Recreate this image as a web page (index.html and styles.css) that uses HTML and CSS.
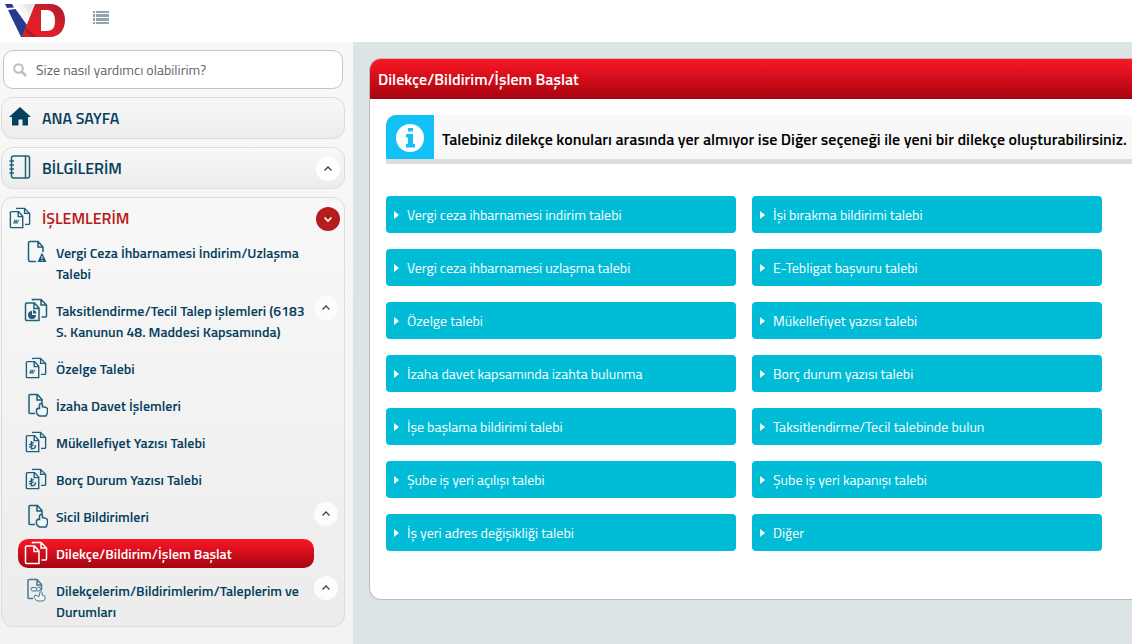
FILE: index.html
```html
<!DOCTYPE html>
<html lang="tr">
<head>
<meta charset="utf-8">
<meta name="viewport" content="width=device-width, initial-scale=1">
<title>Dilekçe/Bildirim/İşlem Başlat</title>
<link rel="stylesheet" href="styles.css">
</head>
<body>
<svg class="sprite" aria-hidden="true">
  <defs>
    <symbol id="sheet" viewBox="0 0 24 24"><path d="M12 21.500H6q-1.500 0-1.500-1.500V3q0-1.500 1.500-1.500h8l5 5.500v5M14 1.500v5.500h5"/></symbol>
    <symbol id="sheets" viewBox="0 0 24 24"><path d="M2.500 5h8l4.500 5v12.500H2.500q-1 0-1-1V6q0-1 1-1zM10 5v5.500h5M8.500 2.500v-1h8.500l5.500 5.500v11q0 1-1 1h-4M17 1.500v5.500h5.500"/></symbol>
    <symbol id="hand" viewBox="0 0 24 24"><path d="M11 20.500H6q-1 0-1-1V2.500q0-1 1-1h7.500l4.500 5v4M13 1.500v5.500h5"/><path class="paper" d="M12.500 16.500q1-1.500 3-1v-3q0-2 1.500-2t1.500 2v1.200q4.500.3 5 2.300v3.500l-1.500 3.500h-6.500q-3.500-2-3-4z"/></symbol>
    <symbol id="lira" viewBox="0 0 24 24"><path d="M7 11v8.500c3 0 4.500-1.500 4.500-4M4.500 15l5-2.500M4.500 17.500l5-2.500"/></symbol>
    <symbol id="up" viewBox="0 0 24 24"><path d="M8.500 13.500l3.500-3.500 3.500 3.500"/></symbol>
    <symbol id="down" viewBox="0 0 24 24"><path d="M8.500 10.500l3.500 3.500 3.500-3.500"/></symbol>
  </defs>
</svg>

<header class="topbar">
  <a class="logo" href="#" aria-label="İVD">
    <svg width="62" height="34" viewBox="0 0 62 34">
      <defs>
        <linearGradient id="logo-red" x1="0" y1="1" x2="1" y2="0"><stop offset="0" stop-color="#ef1c24"/><stop offset=".45" stop-color="#dc2028"/><stop offset="1" stop-color="#ad1c30"/></linearGradient>
      </defs>
      <path fill="#273a8f" d="M0 0h7l2 3.500-7 .500zM3 6l7.500-1L22 21l-5 12h-1z"/>
      <path fill="#e6e6e8" d="M13 0h16l-7 19z"/>
      <path fill="#f7f7f7" d="M13 0h5l7 11-3 8z"/>
      <path fill="url(#logo-red)" fill-rule="evenodd" d="M30 0h15c10 0 15 7 15 16s-5 17-15 17H17zM36 6v21h6c6 0 8-4 8-10s-2-11-8-11z"/>
      <path fill="#a81e2b" d="M21 24l11 9H17z"/>
      <path fill="#d9202a" d="M20 27l7 6H17z"/>
    </svg>
  </a>
  <button class="menu-toggle" type="button" aria-label="Menü">
    <svg width="16" height="13" viewBox="0 0 16 13" fill="#90a4ae"><path d="M0 0h2v2H0zM3 0h13v2H3zM0 3h2v3H0zM3 3h13v3H3zM0 7h2v3H0zM3 7h13v3H3zM0 11h2v2H0zM3 11h13v2H3z"/></svg>
  </button>
</header>

<div class="layout">
  <nav class="sidebar" aria-label="Ana menü">
    <label class="search">
      <svg width="14" height="14" viewBox="0 0 14 14" fill="none" stroke="#b9bec2" stroke-width="2"><circle cx="5.500" cy="5.500" r="4.300"/><path d="M8.700 8.700l4.300 4.300" stroke-width="2.500"/></svg>
      <input type="text" placeholder="Size nasıl yardımcı olabilirim?" aria-label="Size nasıl yardımcı olabilirim?">
    </label>

    <section class="card">
      <div class="card-head">
        <a class="card-link" href="#"><svg class="icon solid" viewBox="0 0 24 24"><path d="M12 1l11 10h-3v8.500h-5.500v-6h-4v6H4V11H1l5-4.500z"/></svg>ANA SAYFA</a>
      </div>
    </section>

    <section class="card">
      <div class="card-head">
        <a class="card-link" href="#"><svg class="icon" viewBox="0 0 24 24"><path d="M5.500 0h14q2 0 2 2v18q0 2-2 2h-14q-2 0-2-2V2q0-2 2-2zM17.500 0v22M1.500 5h4.500M1.500 9h4.500M1.500 13h4.500M1.500 17h4.500"/></svg>BİLGİLERİM</a>
        <button class="round" type="button" aria-label="Bilgilerim aç"><svg viewBox="0 0 24 24"><use href="#up"/></svg></button>
      </div>
    </section>

    <section class="card open">
      <div class="card-head">
        <a class="card-link current" href="#"><svg class="icon small" viewBox="0 0 24 24"><use href="#sheets"/><path class="thin" d="M5 18l1.500-4v4l2-4v4l2.500-4"/></svg>İŞLEMLERİM</a>
        <button class="round red" type="button" aria-label="İşlemlerim kapat"><svg viewBox="0 0 24 24"><use href="#down"/></svg></button>
      </div>
      <ul class="submenu">
        <li><a href="#"><svg class="icon" viewBox="0 0 24 24"><use href="#sheet"/><path class="fill" d="M18 12.500l4.500 9.500h-9z"/><path class="mark" d="M18 16v3M18 20v1"/></svg><span>Vergi Ceza İhbarnamesi İndirim/Uzlaşma Talebi</span></a></li>
        <li><a href="#"><svg class="icon" viewBox="0 0 24 24"><use href="#sheets"/><path class="fill" d="M8 13v4h4a4 4 0 1 1-4-4zM9 12a4 4 0 0 1 3.500 3.500H9z"/></svg><span>Taksitlendirme/Tecil Talep işlemleri (6183 S. Kanunun 48. Maddesi Kapsamında)</span></a><button class="round" type="button" aria-label="Aç"><svg viewBox="0 0 24 24"><use href="#up"/></svg></button></li>
        <li><a href="#"><svg class="icon small" viewBox="0 0 24 24"><use href="#sheets"/><path class="thin" d="M5 18l1.500-4v4l2-4v4l2.500-4"/></svg><span>Özelge Talebi</span></a></li>
        <li><a href="#"><svg class="icon" viewBox="0 0 24 24"><use href="#hand"/></svg><span>İzaha Davet İşlemleri</span></a></li>
        <li><a href="#"><svg class="icon small" viewBox="0 0 24 24"><use href="#sheets"/><use href="#lira"/></svg><span>Mükellefiyet Yazısı Talebi</span></a></li>
        <li><a href="#"><svg class="icon small" viewBox="0 0 24 24"><use href="#sheets"/><use href="#lira"/></svg><span>Borç Durum Yazısı Talebi</span></a></li>
        <li><a href="#"><svg class="icon" viewBox="0 0 24 24"><use href="#hand"/></svg><span>Sicil Bildirimleri</span></a><button class="round" type="button" aria-label="Aç"><svg viewBox="0 0 24 24"><use href="#up"/></svg></button></li>
        <li><a class="active" href="#" aria-current="page"><svg class="icon" viewBox="0 0 24 24"><use href="#sheets"/></svg><span>Dilekçe/Bildirim/İşlem Başlat</span></a></li>
        <li><a href="#"><svg class="icon faint" viewBox="0 0 24 24"><path d="M9 20.500H5q-1 0-1-1V2.500q0-1 1-1h8l4.500 5v6M13 1.500v5.500h4.500"/><path class="thin" d="M8 9.500h3q1.500 0 1.500 2T11 13H9q-2 0-2-2t2-1.500M12.500 10.500l2-1.500q2 0 2 2t-2 2h-2"/><path class="thin paper" d="M11 17l4 1.500 1-4.500q1.500-1 2 .500v2.500l3 1v3.500l-2 1.500h-6l-3-3.500z"/></svg><span>Dilekçelerim/Bildirimlerim/Taleplerim ve Durumları</span></a><button class="round" type="button" aria-label="Aç"><svg viewBox="0 0 24 24"><use href="#up"/></svg></button></li>
      </ul>
    </section>
  </nav>

  <main class="content">
    <section class="panel">
      <h1>Dilekçe/Bildirim/İşlem Başlat</h1>
      <div class="panel-body">
        <div class="notice">
          <div class="notice-icon"><svg width="28" height="28" viewBox="0 0 28 28"><circle cx="14" cy="14" r="14" fill="#fff"/><path fill="#12c1f5" d="M12 4h5v3.500h-5zM10 10h7v10h2v3.500h-9V20h2v-6.500h-2z"/></svg></div>
          <p>Talebiniz dilekçe konuları arasında yer almıyor ise Diğer seçeneği ile yeni bir dilekçe oluşturabilirsiniz.</p>
        </div>
        <div class="actions">
          <button type="button">Vergi ceza ihbarnamesi indirim talebi</button>
          <button type="button">İşi bırakma bildirimi talebi</button>
          <button type="button">Vergi ceza ihbarnamesi uzlaşma talebi</button>
          <button type="button">E-Tebligat başvuru talebi</button>
          <button type="button">Özelge talebi</button>
          <button type="button">Mükellefiyet yazısı talebi</button>
          <button type="button">İzaha davet kapsamında izahta bulunma</button>
          <button type="button">Borç durum yazısı talebi</button>
          <button type="button">İşe başlama bildirimi talebi</button>
          <button type="button">Taksitlendirme/Tecil talebinde bulun</button>
          <button type="button">Şube iş yeri açılışı talebi</button>
          <button type="button">Şube iş yeri kapanışı talebi</button>
          <button type="button">İş yeri adres değişikliği talebi</button>
          <button type="button">Diğer</button>
        </div>
      </div>
    </section>
  </main>
</div>
</body>
</html>
```

FILE: styles.css
```css
* { box-sizing: border-box; }
body {
  margin: 0;
  min-height: 100vh;
  display: flex;
  flex-direction: column;
  background: #fff;
  color: #05405c;
  font-family: "Titillium Web", Roboto, "Liberation Sans", sans-serif;
  font-size: 14px;
}
a { color: inherit; text-decoration: none; }
button, input { font: inherit; }
button { cursor: pointer; border: 0; }
svg { display: block; flex: none; }
.sprite { position: absolute; width: 0; height: 0; }

.topbar { display: flex; align-items: flex-start; gap: 26px; height: 42px; padding: 4px 5px 0; }
.menu-toggle { margin-top: 7px; padding: 0; background: none; }

.layout { flex: 1; display: flex; }
.sidebar {
  flex: none;
  width: 353px;
  padding: 8px 8px 16px 1px;
  display: flex;
  flex-direction: column;
  gap: 8px;
  background: linear-gradient(#f8f8f8, #f3f3f3);
}
.search {
  display: flex;
  align-items: center;
  gap: 9px;
  height: 39px;
  margin: 0 2px;
  padding: 0 9px;
  border: 1px solid #c4c4c4;
  border-radius: 10px;
  background: #fff;
}
.search input { flex: 1; min-width: 0; padding: 0; border: 0; outline: 0; background: none; }
.search input::placeholder { color: #666; opacity: 1; }

.card { border: 1px solid #dcdcdc; border-radius: 12px; background: linear-gradient(#f8f8f8, #ececec); }
.card-head { display: flex; align-items: center; height: 40px; padding-right: 4px; }
.card-link { flex: 1; display: flex; align-items: center; gap: 10px; padding-left: 6px; font-size: 16px; font-weight: 600; }
.card-head .round { margin-top: 2px; }
.current { color: #b71c1c; }

.icon { width: 24px; height: 24px; overflow: visible; fill: none; stroke: #1f5f7a; stroke-width: 1.5; }
.small { padding: 1px; }
.faint { opacity: 0.8; }
.solid { fill: #05405c; stroke: none; }
.fill { fill: #1f5f7a; stroke: none; }
.mark { stroke: #f8f8f8; stroke-width: 1; }
.paper { fill: #f8f8f8; }
.thin { stroke-width: 1; }

.round { flex: none; width: 24px; height: 24px; padding: 0; border-radius: 50%; background: #fff; }
.round svg { width: 24px; height: 24px; fill: none; stroke: #444; stroke-width: 1.3; }
.round.red { background: #b71c1c; }
.round.red svg { stroke: #fff; stroke-width: 1.7; }
.submenu .round { background: #fcfcfc; }

.submenu { list-style: none; margin: 0; padding: 0 6px 0 16px; display: grid; gap: 8px; }
.submenu li { display: grid; grid-template-columns: 1fr 24px; align-items: start; }
.submenu a {
  display: flex;
  align-items: flex-start;
  gap: 8px;
  padding: 4px 6px;
  border-radius: 10px;
  line-height: 21px;
  font-weight: 600;
}
.submenu .icon { margin: -2px 0 -1px; }
.submenu a.active { background: linear-gradient(#fb1726, #a60410); color: #fff; }
.active .icon { stroke: #fff; }

.content { flex: 1; min-width: 0; padding: 16px 0 44px 16px; background: #dce4e6; }
.panel {
  height: 100%;
  border: 1px solid #b5bdc0;
  border-right: 0;
  border-radius: 12px 0 0 12px;
  background: #fff;
  overflow: hidden;
}
.panel h1 {
  margin: 0;
  padding: 0 8px;
  line-height: 40px;
  font-size: 16px;
  font-weight: 600;
  color: #fff;
  background: linear-gradient(#fb1726, #a60410);
}
.panel-body { padding: 16px 0 48px 16px; }
.notice { display: flex; border-bottom: 5px solid #dcdcdc; background: #f8f8f8; border-top-left-radius: 10px; }
.notice-icon { flex: none; width: 48px; height: 44px; padding-top: 2px; display: grid; place-items: center; background: #12c1f5; border-top-left-radius: 10px; }
.notice p { margin: 0; padding: 4px 0 0 8px; line-height: 40px; font-size: 16px; font-weight: 600; color: #000; white-space: nowrap; }
.actions { display: grid; grid-template-columns: 1fr 1fr; gap: 16px; padding: 32px 30px 0 0; }
.actions button {
  display: flex;
  align-items: center;
  gap: 8px;
  height: 37px;
  padding: 0 8px;
  border-radius: 4px;
  background: #00bcd7;
  color: #fff;
  text-align: left;
}
.actions button::before { content: ""; border: 4px solid transparent; border-left: 5px solid #fff; border-right: 0; }
```
